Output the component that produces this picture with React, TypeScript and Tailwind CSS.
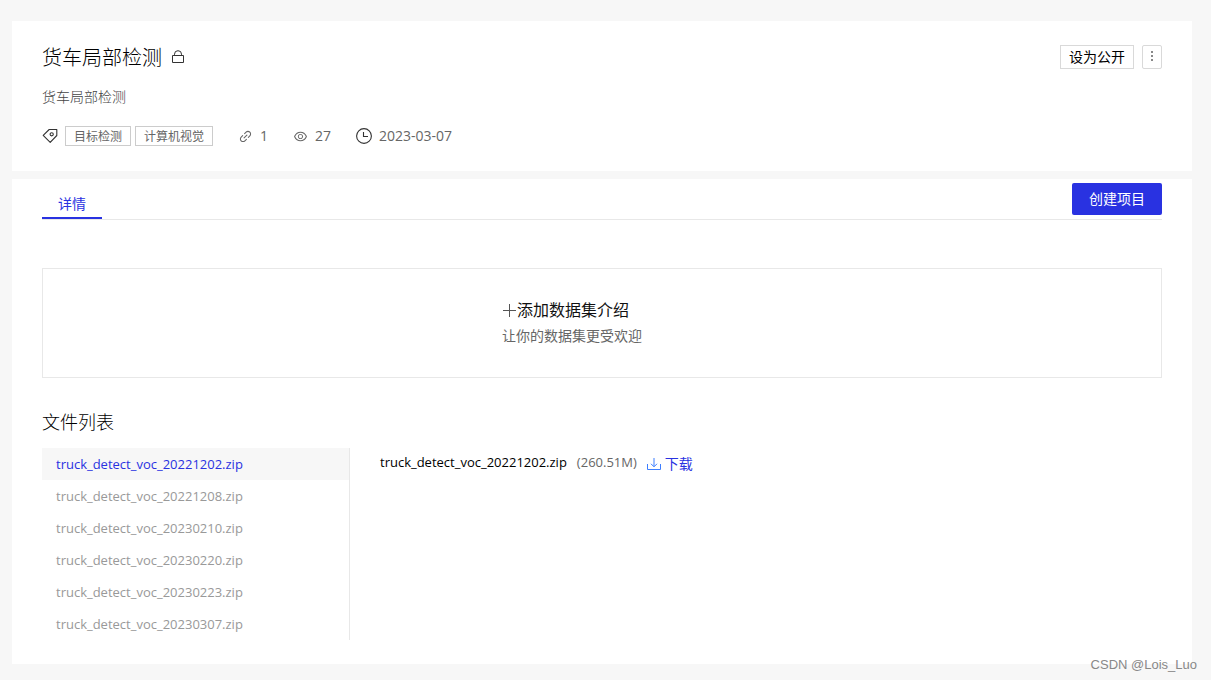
import { useState } from "react";
import { AiOutlineEye, AiOutlineLink } from "react-icons/ai";

const files = [
  "truck_detect_voc_20221202.zip",
  "truck_detect_voc_20221208.zip",
  "truck_detect_voc_20230210.zip",
  "truck_detect_voc_20230220.zip",
  "truck_detect_voc_20230223.zip",
  "truck_detect_voc_20230307.zip",
];

const tags = ["目标检测", "计算机视觉"];

function LockIcon() {
  return (
    <svg width="14" height="14" viewBox="0 0 14 14" fill="none" stroke="#333" strokeWidth="1" aria-hidden="true">
      <path d="M1.5 5.5h11v7h-11zM3.5 5.5V4.2a3.5 3.5 0 0 1 7 0v1.3" />
    </svg>
  );
}

function TagIcon() {
  return (
    <svg width="16" height="16" viewBox="0 0 16 16" fill="none" stroke="#333" strokeWidth="1.1" strokeLinejoin="round" aria-hidden="true">
      <path d="M1.2 7.4 7.2 1.5h7.6v6l-6.6 6.8z" />
      <circle cx="9.7" cy="6.3" r="1.6" />
    </svg>
  );
}

function ClockIcon() {
  return (
    <svg width="16" height="16" viewBox="0 0 16 16" fill="none" stroke="#333" strokeWidth="1.1" aria-hidden="true">
      <circle cx="8" cy="8" r="7.4" />
      <path d="M7.5 4v4.5h4.5" />
    </svg>
  );
}

function DownloadIcon() {
  return (
    <svg width="14" height="14" viewBox="0 0 14 14" fill="none" stroke="#3d7eff" strokeWidth="1" aria-hidden="true">
      <path d="M0.5 7v5.5h13V7" />
      <path d="M7 1v8.5M4 6.8l3 3 3-3" />
    </svg>
  );
}

export default function App() {
  const [selected, setSelected] = useState(files[0]);

  return (
    <div className="relative min-h-screen bg-[#f7f7f7] pt-[21px] pr-[19px] pb-4 pl-3 font-['Open_Sans','Noto_Sans_CJK_SC',sans-serif] text-sm text-[#666]">
      <main className="flex flex-col gap-2">
        <header className="bg-white px-[30px] pt-5 pb-6">
          <div className="flex h-8 items-center justify-between">
            <div className="flex items-center gap-[9px]">
              <h1 className="pt-0.5 text-xl leading-8 font-light text-black">货车局部检测</h1>
              <LockIcon />
            </div>
            <div className="flex gap-2">
              <button type="button" className="h-6 border border-[#d9d9d9] bg-white px-2 leading-[22px] text-black">
                设为公开
              </button>
              <button type="button" aria-label="更多" className="flex h-6 w-5 items-center justify-center rounded-xs border border-[#d9d9d9] bg-white">
                <svg width="2" height="12" viewBox="0 0 2 12" fill="#888" aria-hidden="true">
                  <path d="M0 0h2v2H0zM0 4h2v2H0zM0 8h2v2H0z" />
                </svg>
              </button>
            </div>
          </div>
          <p className="mt-3 leading-6 font-light text-[#444]">货车局部检测</p>
          <div className="mt-4 flex h-[22px] items-center">
            <TagIcon />
            <ul className="ml-[7px] flex gap-1">
              {tags.map((tag) => (
                <li key={tag} className="h-5 border border-[#ccc] px-2 text-xs leading-[19px]">
                  {tag}
                </li>
              ))}
            </ul>
            <span className="ml-[25px] flex items-center gap-[7px]">
              <AiOutlineLink size={15} />1
            </span>
            <span className="ml-[25px] flex items-center gap-[7px]">
              <AiOutlineEye size={15} />
              27
            </span>
            <span className="ml-[25px] flex items-center gap-[7px]">
              <ClockIcon />
              2023-03-07
            </span>
          </div>
        </header>

        <section className="bg-white px-[30px] pb-6">
          <div className="flex items-start justify-between border-b border-[#e8e8e8]">
            <button type="button" className="h-10 border-b-2 border-[#2932e1] px-4 pt-3 leading-[22px] text-[#2932e1]">
              详情
            </button>
            <button type="button" className="mt-1 h-8 rounded-xs bg-[#2932e1] px-[17px] leading-8 text-white">
              创建项目
            </button>
          </div>

          <div className="mt-12 border border-[#e8e8e8] py-7">
            <div className="mx-auto w-[200px]">
              <button type="button" className="flex items-center gap-px text-base leading-[26px] text-[#111]">
                <svg width="14" height="14" viewBox="0 0 14 14" stroke="#555" aria-hidden="true">
                  <path d="M1 7.5h13M7.5 1v13" />
                </svg>
                添加数据集介绍
              </button>
              <p className="leading-[26px]">让你的数据集更受欢迎</p>
            </div>
          </div>

          <h2 className="mt-[30px] text-lg leading-7 font-light text-black">文件列表</h2>
          <div className="mt-3 flex">
            <ul className="w-[308px] shrink-0 border-r border-[#e8e8e8] text-[13px]">
              {files.map((file) => (
                <li key={file}>
                  <button
                    type="button"
                    onClick={() => setSelected(file)}
                    className={
                      file === selected
                        ? "block h-8 w-full bg-[#f7f7f7] px-3.5 text-left leading-8 text-[#2932e1]"
                        : "block h-8 w-full px-3.5 text-left leading-8 text-[#999]"
                    }
                  >
                    {file}
                  </button>
                </li>
              ))}
            </ul>
            <div className="flex items-start gap-2.5 pl-[30px]">
              <span className="text-[13px] leading-7 text-black">{selected}</span>
              <span className="text-[13px] leading-7">(260.51M)</span>
              <a href="#download" className="flex items-center gap-1 leading-8 text-[#2932e1]">
                <DownloadIcon />
                下载
              </a>
            </div>
          </div>
        </section>
      </main>
      <span className="absolute right-3.5 bottom-[5px] font-['Liberation_Sans',sans-serif] text-[13px] leading-5 text-[#888]">
        CSDN @Lois_Luo
      </span>
    </div>
  );
}
